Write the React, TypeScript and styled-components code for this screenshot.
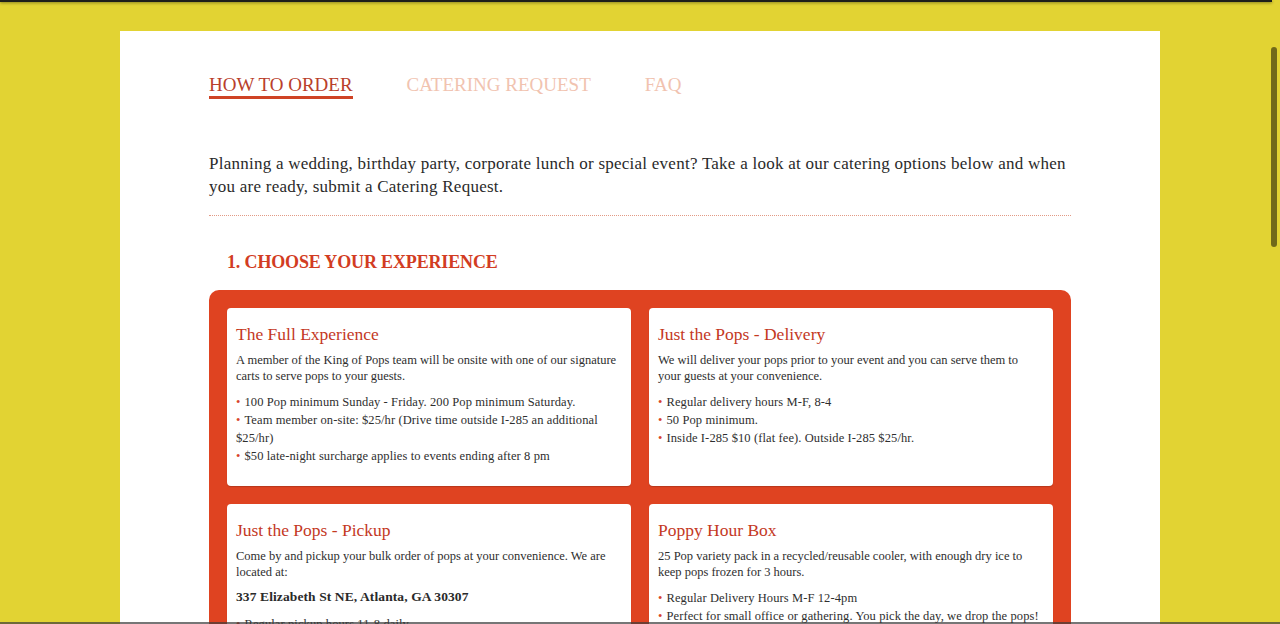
import styled, { createGlobalStyle } from "styled-components";

const GlobalStyle = createGlobalStyle`
    html, body {
        margin: 0;
        padding: 0;
        background: #e2d333;
        font-family: "Liberation Serif", "Times New Roman", serif;
        color: #2e2e2e;
    }
    body {
        height: 624px;
        overflow: hidden;
    }
`;

const TopShade = styled.div`
    position: fixed;
    top: 0;
    left: 0;
    right: 8px;
    height: 2px;
    background: #1e1e1a;
    box-shadow: 0 1px 3px rgba(0, 0, 0, 0.45);
    z-index: 5;
`;

const BottomShade = styled.div`
    position: fixed;
    bottom: 0;
    left: 0;
    right: 0;
    height: 2px;
    background: rgba(60, 60, 60, 0.7);
    z-index: 5;
`;

const ScrollThumb = styled.div`
    position: fixed;
    top: 47px;
    right: 3px;
    width: 6px;
    height: 200px;
    border-radius: 3px;
    background: rgba(0, 0, 0, 0.5);
    z-index: 6;
`;

const Page = styled.div`
    padding-top: 31px;
`;

const Panel = styled.main`
    width: 1040px;
    margin: 0 auto;
    background: #fff;
    box-sizing: border-box;
    padding: 44px 89px 40px;
    min-height: 700px;
`;

const Tabs = styled.nav`
    display: flex;
    gap: 54px;
`;

const Tab = styled.a<{ $active?: boolean }>`
    font-size: 19px;
    line-height: 20px;
    text-transform: uppercase;
    text-decoration: none;
    padding-bottom: 1px;
    color: ${(p) => (p.$active ? "#b9402b" : "#f1c3b0")};
    border-bottom: 3px solid ${(p) => (p.$active ? "#cf4325" : "transparent")};
    cursor: pointer;
`;

const Intro = styled.p`
    margin: 53px 0 0;
    font-size: 17px;
    line-height: 23px;
    letter-spacing: 0.25px;
    color: #2a2a2a;
    padding-bottom: 17px;
    border-bottom: 1px dotted #e29a85;
`;

const StepHeading = styled.h2`
    margin: 35px 0 0 18px;
    font-size: 18px;
    line-height: 22px;
    font-weight: bold;
    letter-spacing: -0.15px;
    text-transform: uppercase;
    color: #d23c22;
`;

const OptionsBox = styled.section`
    margin-top: 17px;
    background: #df4321;
    border-radius: 10px;
    padding: 18px;
    display: grid;
    grid-template-columns: 1fr 1fr;
    gap: 18px;
`;

const Card = styled.article`
    background: #fff;
    border-radius: 4px;
    box-shadow: 0 1px 1px rgba(0, 0, 0, 0.18);
    padding: 15px 9px 21px;
`;

const CardTitle = styled.h3`
    margin: 0;
    font-size: 17.5px;
    line-height: 22px;
    font-weight: normal;
    color: #c4391f;
`;

const CardText = styled.p`
    margin: 7px 0 0;
    font-size: 12.5px;
    line-height: 16px;
    color: #2e2e2e;
`;

const Address = styled.p`
    margin: 8px 0 0;
    font-size: 13.5px;
    line-height: 18px;
    font-weight: bold;
    letter-spacing: 0.1px;
    color: #2a2a2a;
`;

const Bullets = styled.ul`
    list-style: none;
    margin: 9px 0 0;
    padding: 0;
    font-size: 12.5px;
    line-height: 18px;
    letter-spacing: 0.1px;
    color: #2e2e2e;
`;

const Bullet = styled.li`
    &::before {
        content: "•";
        color: #d8442a;
        margin-right: 4px;
    }
`;

interface IOption {
    title: string;
    text: string;
    address?: string;
    items: string[];
}

const options: IOption[] = [
    {
        title: "The Full Experience",
        text: "A member of the King of Pops team will be onsite with one of our signature carts to serve pops to your guests.",
        items: [
            "100 Pop minimum Sunday - Friday. 200 Pop minimum Saturday.",
            "Team member on-site: $25/hr (Drive time outside I-285 an additional $25/hr)",
            "$50 late-night surcharge applies to events ending after 8 pm",
        ],
    },
    {
        title: "Just the Pops - Delivery",
        text: "We will deliver your pops prior to your event and you can serve them to your guests at your convenience.",
        items: [
            "Regular delivery hours M-F, 8-4",
            "50 Pop minimum.",
            "Inside I-285 $10 (flat fee). Outside I-285 $25/hr.",
        ],
    },
    {
        title: "Just the Pops - Pickup",
        text: "Come by and pickup your bulk order of pops at your convenience. We are located at:",
        address: "337 Elizabeth St NE, Atlanta, GA 30307",
        items: ["Regular pickup hours 11-8 daily", "No minimum order."],
    },
    {
        title: "Poppy Hour Box",
        text: "25 Pop variety pack in a recycled/reusable cooler, with enough dry ice to keep pops frozen for 3 hours.",
        items: [
            "Regular Delivery Hours M-F 12-4pm",
            "Perfect for small office or gathering. You pick the day, we drop the pops!",
        ],
    },
];

export default function App() {
    return (
        <>
            <GlobalStyle />
            <TopShade />
            <ScrollThumb />
            <BottomShade />
            <Page>
                <Panel>
                    <Tabs>
                        <Tab $active>How to Order</Tab>
                        <Tab>Catering Request</Tab>
                        <Tab>FAQ</Tab>
                    </Tabs>
                    <Intro>
                        Planning a wedding, birthday party, corporate lunch or special
                        event? Take a look at our catering options below and when you
                        are ready, submit a Catering Request.
                    </Intro>
                    <StepHeading>1. Choose your experience</StepHeading>
                    <OptionsBox>
                        {options.map((o) => (
                            <Card key={o.title}>
                                <CardTitle>{o.title}</CardTitle>
                                <CardText>{o.text}</CardText>
                                {o.address && <Address>{o.address}</Address>}
                                <Bullets>
                                    {o.items.map((it) => (
                                        <Bullet key={it}>{it}</Bullet>
                                    ))}
                                </Bullets>
                            </Card>
                        ))}
                    </OptionsBox>
                </Panel>
            </Page>
        </>
    );
}
